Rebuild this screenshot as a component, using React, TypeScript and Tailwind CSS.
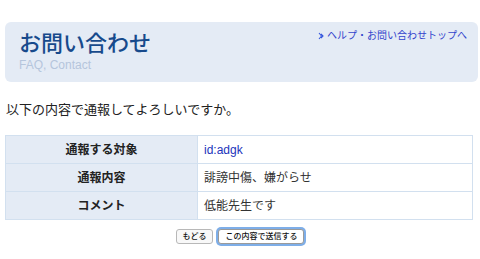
export default function App() {
  const rows = [
    { label: "通報する対象", value: "id:adgk", link: true },
    { label: "通報内容", value: "誹謗中傷、嫌がらせ" },
    { label: "コメント", value: "低能先生です" },
  ];

  return (
    <div
      className="w-[480px] h-[259px] bg-white overflow-hidden"
      style={{ fontFamily: '"Liberation Sans", "Noto Sans CJK JP", sans-serif' }}
    >
      <div className="px-[5px] pt-[22px] w-[473px] box-content">
        {/* Header */}
        <div className="relative h-[60px] rounded-[6px] bg-[#e4ebf5] pl-[14px] pt-[9px]">
          <h1 className="text-[22px] leading-[26px] text-[#174a8c] font-medium">お問い合わせ</h1>
          <p className="text-[12px] leading-[14px] text-[#b5c5dc] mt-[1px]">FAQ, Contact</p>
          <a
            href="#"
            className="absolute right-[11px] top-[8px] flex items-center gap-[3px] text-[10px] leading-[12px] text-[#3344cc]"
          >
            <svg width="6" height="8" viewBox="0 0 6 8" className="text-[#3355dd]">
              <path d="M1 1l2.5 3L1 7" fill="none" stroke="currentColor" strokeWidth="1.1" />
              <path d="M3 2l2 2-2 2" fill="none" stroke="currentColor" strokeWidth="1.1" />
            </svg>
            ヘルプ・お問い合わせトップへ
          </a>
        </div>

        {/* Message */}
        <p className="mt-[21px] pl-[1px] text-[13px] leading-[14px] text-[#222]">
          以下の内容で通報してよろしいですか。
        </p>

        {/* Table */}
        <table className="mt-[18px] w-[468px] border-collapse text-[12px] text-[#333]">
          <tbody>
            {rows.map((r) => (
              <tr key={r.label} className="h-[28px]">
                <th className="w-[192px] border border-[#d2e0ef] bg-[#e4ebf5] font-bold text-center text-[#222]">
                  {r.label}
                </th>
                <td className="border border-[#d2e0ef] pl-[6px]">
                  {r.link ? <span className="text-[#2233bb]">{r.value}</span> : r.value}
                </td>
              </tr>
            ))}
          </tbody>
        </table>

        {/* Buttons */}
        <div className="mt-[9px] flex justify-center gap-[5px] pr-[3px]">
          <button className="h-[15px] px-[6px] rounded-[3px] border border-[#b8b8b8] bg-[#f8f8f8] text-[8px] leading-[12px] font-medium text-[#111]">
            もどる
          </button>
          <button className="h-[15px] px-[6px] rounded-[3px] border border-[#9a9a9a] bg-white text-[8px] leading-[12px] font-medium text-[#111] shadow-[0_0_0_2px_#7eaee8]">
            この内容で送信する
          </button>
        </div>
      </div>
    </div>
  );
}
